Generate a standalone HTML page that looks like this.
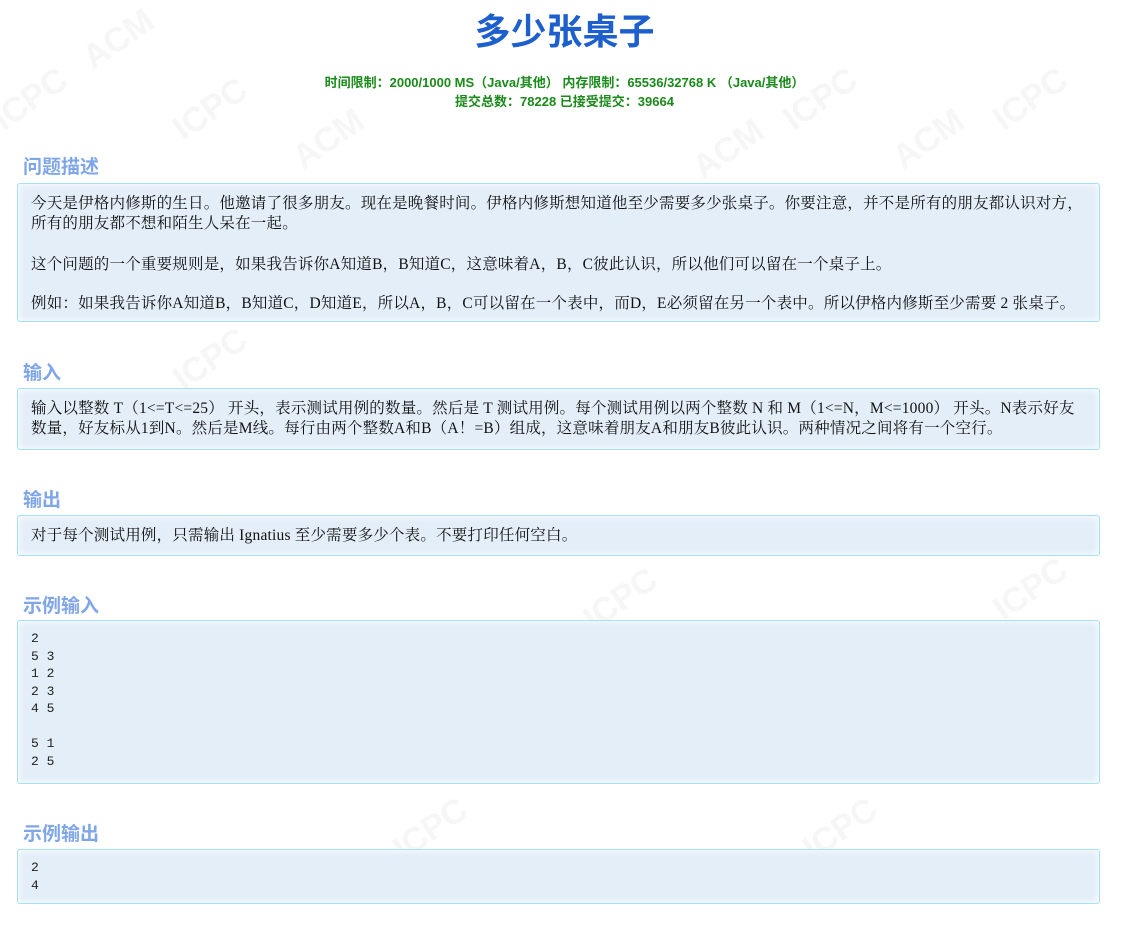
<!DOCTYPE html>
<html><head><meta charset="utf-8"><style>
body{margin:0;background:#fff;width:1129px;height:930px;overflow:hidden;position:relative;font-family:"Liberation Serif","Noto Serif CJK SC",serif;}
.wm{position:absolute;color:#f6f6f6;font:bold 34px "Liberation Sans",sans-serif;transform:rotate(-35deg);white-space:nowrap;z-index:0}
h1{position:absolute;top:3px;left:0;width:1129px;text-align:center;margin:0;font:bold 36px "Liberation Sans","Noto Sans CJK SC",sans-serif;color:#1c5fcd;z-index:1}
.info{position:absolute;left:0;width:1129px;text-align:center;font:bold 13px "Liberation Sans","Noto Sans CJK SC",sans-serif;color:#1a8a1a;z-index:1}
h2{position:absolute;left:23px;margin:0;font:bold 19px "Liberation Sans","Noto Sans CJK SC",sans-serif;color:#7fa6e8;z-index:1}
.box{position:absolute;left:17px;width:1083px;box-sizing:border-box;border:1px solid #a6e0f4;border-radius:3px;background:#e3eef8;box-shadow:inset 0 0 8px #fff;padding:0 0 0 13px;font-size:15.5px;letter-spacing:0.2px;color:#111;line-height:20px;z-index:1;white-space:nowrap;overflow:hidden}
.box p{margin:0}
pre{margin:0;font:13px/17.5px "Liberation Mono",monospace;color:#222;letter-spacing:0}
</style></head><body>
<div class="wm" style="left:80px;top:20px">ACM</div>
<div class="wm" style="left:-10px;top:80px">ICPC</div>
<div class="wm" style="left:170px;top:90px">ICPC</div>
<div class="wm" style="left:290px;top:120px">ACM</div>
<div class="wm" style="left:690px;top:130px">ACM</div>
<div class="wm" style="left:890px;top:120px">ACM</div>
<div class="wm" style="left:990px;top:80px">ICPC</div>
<div class="wm" style="left:780px;top:80px">ICPC</div>
<div class="wm" style="left:170px;top:340px">ICPC</div>
<div class="wm" style="left:580px;top:580px">ICPC</div>
<div class="wm" style="left:990px;top:570px">ICPC</div>
<div class="wm" style="left:390px;top:810px">ICPC</div>
<div class="wm" style="left:800px;top:810px">ICPC</div>
<h1>多少张桌子</h1>
<div class="info" style="top:72px">时间限制：2000/1000 MS（Java/其他） 内存限制：65536/32768 K （Java/其他）</div>
<div class="info" style="top:91px">提交总数：78228 已接受提交：39664</div>

<h2 style="top:152px">问题描述</h2>
<div class="box" style="top:183px;height:139px;padding-top:10px">
<p>今天是伊格内修斯的生日。他邀请了很多朋友。现在是晚餐时间。伊格内修斯想知道他至少需要多少张桌子。你要注意，并不是所有的朋友都认识对方，<br>所有的朋友都不想和陌生人呆在一起。</p>
<p style="margin-top:21px">这个问题的一个重要规则是，如果我告诉你A知道B，B知道C，这意味着A，B，C彼此认识，所以他们可以留在一个桌子上。</p>
<p style="margin-top:19px">例如：如果我告诉你A知道B，B知道C，D知道E，所以A，B，C可以留在一个表中，而D，E必须留在另一个表中。所以伊格内修斯至少需要 2 张桌子。</p>
</div>

<h2 style="top:358px">输入</h2>
<div class="box" style="top:388px;height:62px;padding-top:10px">
<p>输入以整数 T（1&lt;=T&lt;=25） 开头，表示测试用例的数量。然后是 T 测试用例。每个测试用例以两个整数 N 和 M（1&lt;=N，M&lt;=1000） 开头。N表示好友<br>数量，好友标从1到N。然后是M线。每行由两个整数A和B（A！=B）组成，这意味着朋友A和朋友B彼此认识。两种情况之间将有一个空行。</p>
</div>

<h2 style="top:485px">输出</h2>
<div class="box" style="top:515px;height:41px;padding-top:10px">
<p>对于每个测试用例，只需输出 Ignatius 至少需要多少个表。不要打印任何空白。</p>
</div>

<h2 style="top:591px">示例输入</h2>
<div class="box" style="top:620px;height:164px;padding-top:9px">
<pre>2
5 3
1 2
2 3
4 5

5 1
2 5</pre>
</div>

<h2 style="top:819px">示例输出</h2>
<div class="box" style="top:849px;height:55px;padding-top:9px">
<pre>2
4</pre>
</div>
</body></html>
